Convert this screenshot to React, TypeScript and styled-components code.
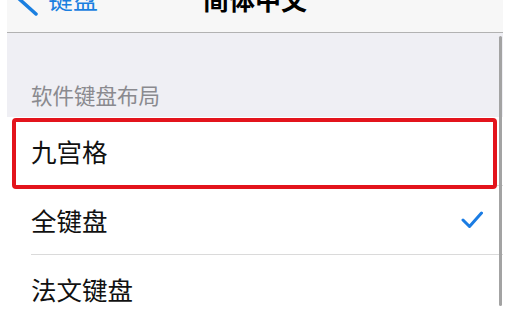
import React from 'react';
import styled, { createGlobalStyle } from 'styled-components';

const GlobalStyle = createGlobalStyle`
  html, body {
    margin: 0;
    padding: 0;
    background: #ffffff;
    overflow: hidden;
    font-family: "Noto Sans CJK SC", "Noto Sans", sans-serif;
  }
`;

// The phone screen, cropped at the top of the picture
const Screen = styled.div`
  position: relative;
  width: 496px;
  margin: -35px 0 0 7px;
`;

const NavBar = styled.div`
  height: 67px;
  display: grid;
  grid-template-columns: 1fr auto 1fr;
  align-items: center;
  background: #f7f7f7;
  border-bottom: 1px solid #b2b2b2;
`;

const BackButton = styled.div`
  display: flex;
  align-items: center;
  gap: 10px;
  padding-left: 7px;
  color: #1a7fe0;
  font-size: 25px;
  line-height: 1;
`;

const Title = styled.div`
  font-size: 26px;
  font-weight: 600;
  line-height: 1;
  color: #000;
`;

const Content = styled.div`
  position: relative;
`;

const SectionHeader = styled.div`
  height: 84px;
  box-sizing: border-box;
  display: flex;
  align-items: flex-end;
  padding: 0 0 12px 24px;
  background: #efeff4;
  color: #8a8a8f;
  font-size: 21.5px;
  line-height: 1;
`;

const Row = styled.div`
  position: relative;
  padding-left: 24px;
  background: #fff;
`;

const RowBody = styled.div<{ $last?: boolean }>`
  height: 68px;
  display: flex;
  align-items: center;
  justify-content: space-between;
  padding-right: 20px;
  border-bottom: ${({ $last }) => ($last ? 'none' : '1px solid #dadada')};
  font-size: 25.5px;
  line-height: 1;
  color: #111;
`;

// Red annotation box drawn over the first row
const Highlight = styled.div`
  position: absolute;
  z-index: 2;
  left: 5px;
  top: 1px;
  width: 485px;
  height: 71px;
  box-sizing: border-box;
  border: 4.5px solid #e3141c;
  border-radius: 4px;
`;

const ScrollIndicator = styled.div`
  position: absolute;
  z-index: 3;
  right: 1px;
  top: 3px;
  width: 3px;
  height: 270px;
  border-radius: 2px;
  background: #a3a3a3;
`;

const ChevronLeft = () => (
  <svg width="24" height="40" viewBox="0 0 24 40">
    <path d="M22 3 L3 18 L22 35" fill="none" stroke="#1a7fe0" strokeWidth="3.5" strokeLinecap="round" strokeLinejoin="round" />
  </svg>
);

const Check = () => (
  <svg width="22" height="18" viewBox="0 0 22 18">
    <path d="M2 9 L8.5 15.5 L20.5 2" fill="none" stroke="#1b7ce3" strokeWidth="3" strokeLinecap="round" strokeLinejoin="round" />
  </svg>
);

const layouts = [
  { name: '九宫格', highlighted: true },
  { name: '全键盘', checked: true },
  { name: '法文键盘' },
];

const App: React.FC = () => {
  return (
    <>
      <GlobalStyle />
      <Screen>
        <NavBar>
          <BackButton>
            <ChevronLeft />
            <span>键盘</span>
          </BackButton>
          <Title>简体中文</Title>
          <div />
        </NavBar>
        <Content>
          <SectionHeader>软件键盘布局</SectionHeader>
          {layouts.map((item, i) => (
            <Row key={item.name}>
              <RowBody $last={i === layouts.length - 1}>
                <span>{item.name}</span>
                {item.checked && <Check />}
              </RowBody>
              {item.highlighted && <Highlight />}
            </Row>
          ))}
          <ScrollIndicator />
        </Content>
      </Screen>
    </>
  );
};

export default App;
